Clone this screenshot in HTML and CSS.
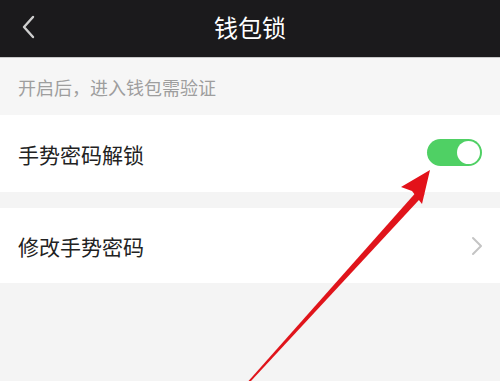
FILE: index.html
```html
<!DOCTYPE html>
<html lang="zh-CN">
<head>
<meta charset="utf-8">
<link rel="stylesheet" href="styles.css">
</head>
<body>
<div class="page">
  <header class="nav">
    <svg class="back" width="14" height="24" viewBox="0 0 14 24"><path d="M12 2 L3 12 L12 22" fill="none" stroke="#cfcfcf" stroke-width="2.4" stroke-linecap="round" stroke-linejoin="round"/></svg>
    <h1 class="title">钱包锁</h1>
  </header>
  <div class="hint">开启后，进入钱包需验证</div>
  <div class="row first">
    <span class="label">手势密码解锁</span>
    <span class="toggle"><span class="knob"></span></span>
  </div>
  <div class="row second">
    <span class="label">修改手势密码</span>
    <svg class="chev" width="12" height="20" viewBox="0 0 12 20"><path d="M2 2 L10 10 L2 18" fill="none" stroke="#c4c4c4" stroke-width="2" stroke-linecap="round" stroke-linejoin="round"/></svg>
  </div>
  <svg class="arrow" width="500" height="381" viewBox="0 0 500 381">
    <path d="M248.5 381 L251 381 L424.5 194 L419 189 Z" fill="#e0141b"/>
    <path d="M430 170 L401 187 L412 191 L422 204 Z" fill="#e3121a"/>
  </svg>
</div>
</body>
</html>
```
FILE: styles.css
```css
* { box-sizing: border-box; margin: 0; padding: 0; }
html, body { width: 500px; height: 381px; overflow: hidden; }
body {
  background: #f4f4f4;
  font-family: "Noto Sans CJK SC", "Noto Sans", sans-serif;
}
.page { position: relative; width: 500px; height: 381px; }
.nav {
  height: 58px;
  background: #1b1a1c;
  border-bottom: 1px solid #c8c8c8;
  display: flex;
  align-items: center;
  justify-content: center;
  position: relative;
}
.back { position: absolute; left: 21px; top: 15px; }
.title {
  color: #ffffff;
  font-size: 24px;
  font-weight: 400;
  line-height: 1;
  margin-top: -4px;
}
.hint {
  height: 57px;
  padding-left: 18px;
  display: flex;
  align-items: center;
  font-size: 18px;
  color: #9e9e9e;
  background: #f6f6f6;
}
.row {
  background: #ffffff;
  display: flex;
  align-items: center;
  justify-content: space-between;
  padding: 0 18px;
}
.row.first { height: 77px; padding-right: 18px; }
.row.second { height: 75px; margin-top: 16px; padding-right: 17px; }
.label { font-size: 21px; color: #222222; }
.toggle {
  width: 55px;
  height: 27px;
  border-radius: 14px;
  background: #4fd064;
  display: flex;
  align-items: center;
  justify-content: flex-end;
  padding-right: 2px;
  margin-bottom: 2px;
}
.knob {
  width: 23px;
  height: 23px;
  border-radius: 50%;
  background: #ffffff;
}
.arrow { position: absolute; left: 0; top: 0; }
```
